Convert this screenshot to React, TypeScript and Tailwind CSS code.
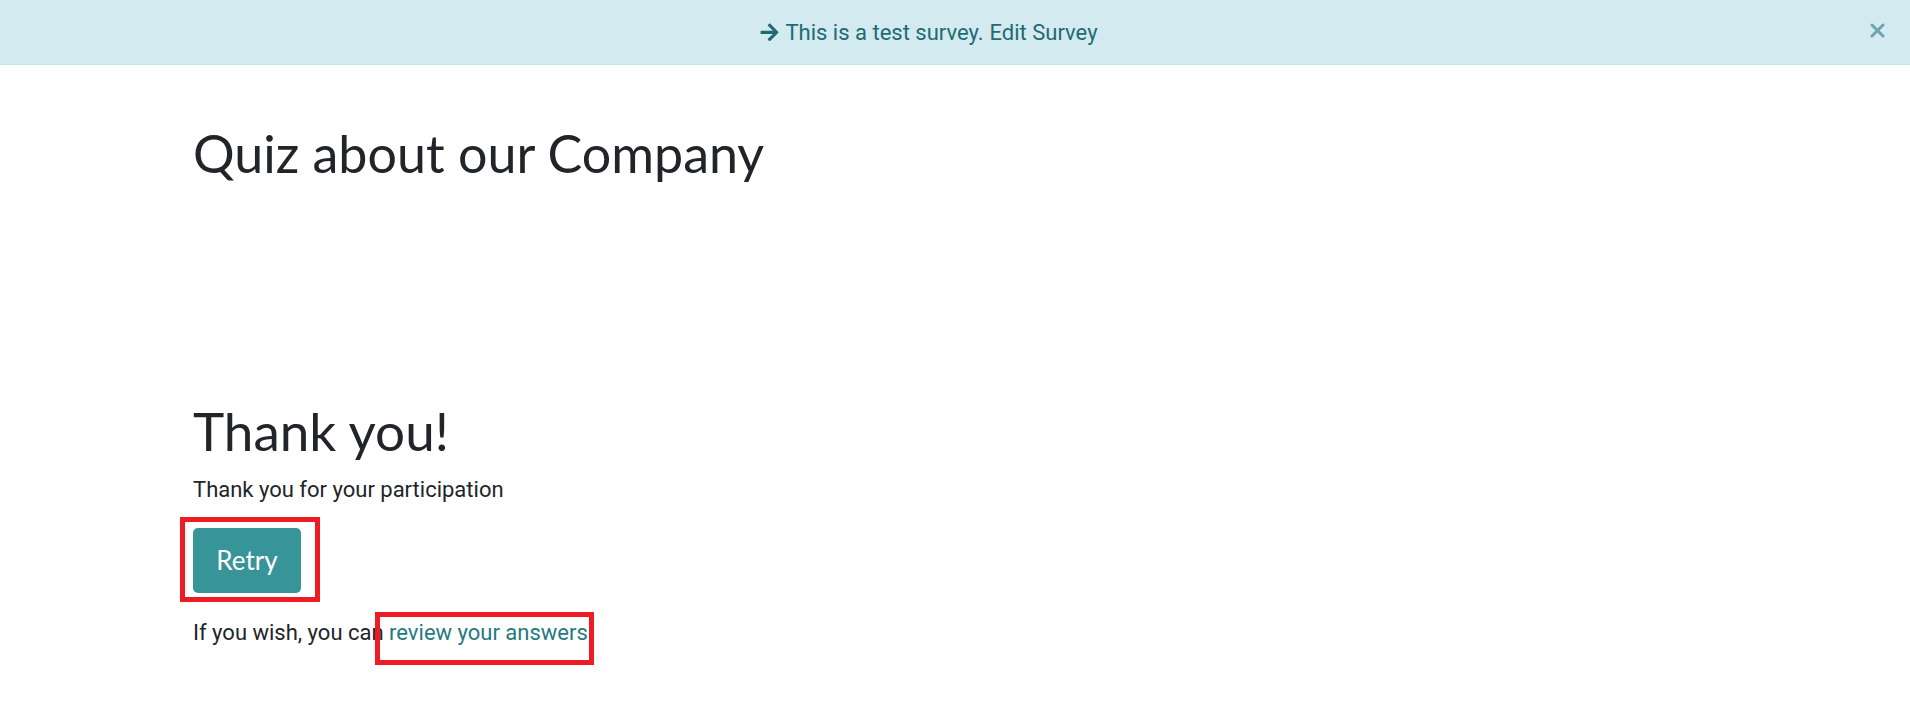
export default function App() {
  return (
    <div className="min-h-[714px] bg-white font-['Roboto',sans-serif] text-[#212529]">
      <div className="relative flex h-[65px] items-center justify-center border-b border-[#bee5eb] bg-[#d2eaf0] text-[22px] text-[#1f6a73]">
        <div className="flex items-center gap-[6px] pr-[52px]">
          <svg width="19" height="18" viewBox="0 0 448 448" className="fill-[#1f6a73]">
            <path d="M190 43l22-22c9-9 25-9 34 0l194 194c9 9 9 25 0 34L246 443c-9 9-25 9-34 0l-22-22c-9-9-9-25 0-34l120-114H24c-13 0-24-11-24-24v-32c0-13 11-24 24-24h286L190 77c-9-9-10-25 0-34z" />
          </svg>
          <span>This is a test survey.</span>
          <span>Edit Survey</span>
        </div>
        <svg width="15" height="15" viewBox="0 0 15 15" className="absolute right-[25px] top-[23px]">
          <path d="M2 2L13 13M13 2L2 13" stroke="#6fa3ad" strokeWidth="3" strokeLinecap="round" />
        </svg>
      </div>

      <div className="pl-[193px]">
        <h1 className="pt-[52px] font-['Lato',sans-serif] text-[52px] leading-[72px] text-[#212529]">
          Quiz about our Company
        </h1>

        <h2 className="mt-[206px] font-['Lato',sans-serif] text-[53px] leading-[72px] text-[#212529]">
          Thank you!
        </h2>
        <p className="mt-[8px] text-[22px] leading-[30px]">Thank you for your participation</p>

        <div className="relative mt-[23px] inline-block">
          <button className="h-[65px] w-[108px] rounded-[5px] bg-[#379599] font-['Lato',sans-serif] text-[26px] text-white">
            Retry
          </button>
          <div className="pointer-events-none absolute -left-[13px] -top-[11px] h-[85px] w-[140px] border-[5px] border-[#ed1c24]" />
        </div>

        <p className="relative mt-[25px] text-[22px] leading-[30px]">
          If you wish, you can{" "}
          <a className="text-[#247a80]">review your answers</a>
          <span className="pointer-events-none absolute left-[182px] -top-[6px] h-[53px] w-[219px] border-[5px] border-[#ed1c24]" />
        </p>
      </div>
    </div>
  );
}
